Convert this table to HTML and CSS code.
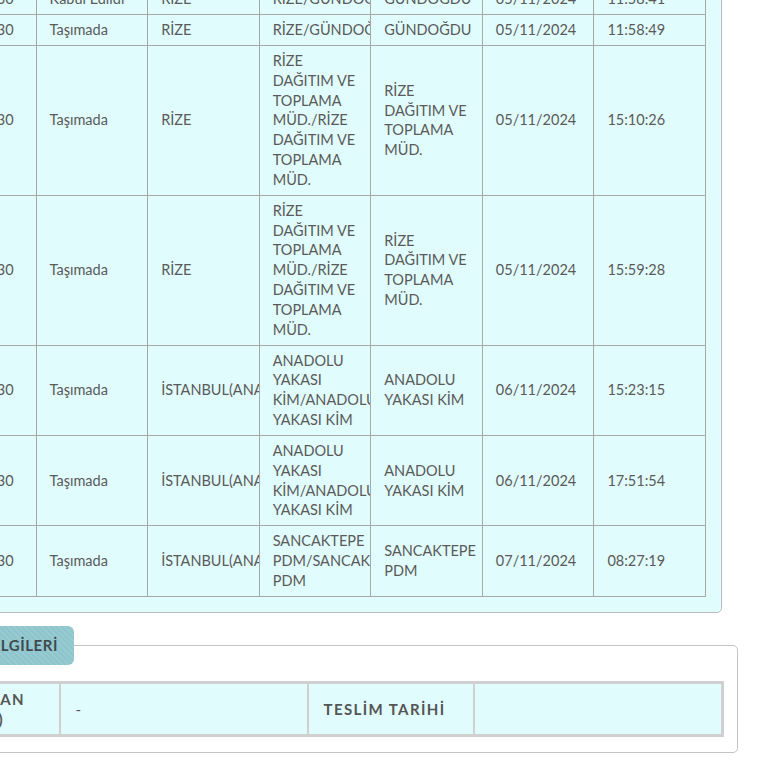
FILE: index.html
```html
<!DOCTYPE html>
<html lang="tr">
<head>
<meta charset="utf-8">
<title>Gönderi Hareketleri</title>
<link rel="stylesheet" href="styles.css">
</head>
<body>
<div class="page">
  <div class="panel">
    <table class="moves">
      <tbody>
        <tr><td>784296530</td><td>Kabul Edildi</td><td>RİZE</td><td>RİZE/GÜNDOĞDU</td><td>GÜNDOĞDU</td><td>05/11/2024</td><td>11:58:41</td></tr>
        <tr><td>784296530</td><td>Taşımada</td><td>RİZE</td><td>RİZE/GÜNDOĞDU</td><td>GÜNDOĞDU</td><td>05/11/2024</td><td>11:58:49</td></tr>
        <tr><td>784296530</td><td>Taşımada</td><td>RİZE</td><td>RİZE DAĞITIM VE TOPLAMA MÜD./RİZE DAĞITIM VE TOPLAMA MÜD.</td><td>RİZE DAĞITIM VE TOPLAMA MÜD.</td><td>05/11/2024</td><td>15:10:26</td></tr>
        <tr><td>784296530</td><td>Taşımada</td><td>RİZE</td><td>RİZE DAĞITIM VE TOPLAMA MÜD./RİZE DAĞITIM VE TOPLAMA MÜD.</td><td>RİZE DAĞITIM VE TOPLAMA MÜD.</td><td>05/11/2024</td><td>15:59:28</td></tr>
        <tr><td>784296530</td><td>Taşımada</td><td>İSTANBUL(ANADOLU)</td><td>ANADOLU YAKASI KİM/ANADOLU YAKASI KİM</td><td>ANADOLU YAKASI KİM</td><td>06/11/2024</td><td>15:23:15</td></tr>
        <tr><td>784296530</td><td>Taşımada</td><td>İSTANBUL(ANADOLU)</td><td>ANADOLU YAKASI KİM/ANADOLU YAKASI KİM</td><td>ANADOLU YAKASI KİM</td><td>06/11/2024</td><td>17:51:54</td></tr>
        <tr><td>784296530</td><td>Taşımada</td><td>İSTANBUL(ANADOLU)</td><td>SANCAKTEPE PDM/SANCAKTEPE PDM</td><td>SANCAKTEPE PDM</td><td>07/11/2024</td><td>08:27:19</td></tr>
      </tbody>
    </table>
  </div>

  <fieldset class="info">
    <legend class="info-title">TESLİM BİLGİLERİ</legend>
    <table class="info-table">
      <colgroup>
        <col class="c1"><col class="c2"><col class="c3"><col class="c4">
      </colgroup>
      <tbody>
        <tr>
          <th class="first">TESLİM ALAN<br>(ALICI ADI)</th>
          <td>-</td>
          <th>TESLİM TARİHİ</th>
          <td></td>
        </tr>
      </tbody>
    </table>
  </fieldset>
</div>
</body>
</html>
```

FILE: styles.css
```css
html, body {
  margin: 0;
  padding: 0;
  background: #ffffff;
}

body {
  font-family: Lato, "Open Sans", "DejaVu Sans", sans-serif;
  color: #5a5a5a;
  overflow: hidden;
}

.page {
  margin: -33px 0 0 -130px;
  width: 868px;
}

.panel {
  margin: 0 16px 0 38px;
  background: #e1fcfc;
  border: 1px solid #bcbcbc;
  border-radius: 5px;
  padding: 15px;
}

.moves {
  width: 782px;
  table-layout: fixed;
  border-collapse: collapse;
}

.moves td {
  border: 1px solid #a8a8a8;
  padding: 5.1px 12px 5.1px 13px;
  font-size: 14.5px;
  line-height: 19.8px;
  color: #5a5a5a;
  vertical-align: middle;
  text-align: left;
  overflow: hidden;
}

.info {
  margin: 13px 0 0;
  border: 1px solid #c4c4c4;
  border-radius: 5px;
  padding: 16px 16px 15px;
  min-width: 0;
}

.info-title {
  margin-left: 22px;
  padding: 10px 16px;
  background-color: #8ec5cd;
  background-image: repeating-linear-gradient(45deg, rgba(255, 255, 255, 0.09) 0 2px, rgba(255, 255, 255, 0) 2px 4px);
  border-radius: 6px;
  font-weight: 700;
  font-size: 15px;
  line-height: 19px;
  letter-spacing: 0.6px;
  color: #3e4a4f;
}

.info-table {
  width: 100%;
  table-layout: fixed;
  border-collapse: collapse;
  border: 3px solid #d0d0d0;
}

.info-table .c1 { width: 171px; }
.info-table .c2 { width: 248px; }
.info-table .c3 { width: 166px; }
.info-table .c4 { width: 249px; }

.info-table th,
.info-table td {
  background: #e1fcfc;
  border: 2px solid #d0d0d0;
  padding: 5px 15px;
  font-size: 15px;
  line-height: 20px;
  color: #555;
  text-align: left;
  vertical-align: middle;
  overflow: hidden;
}

.info-table th {
  font-weight: 700;
  letter-spacing: 1.4px;
}

.info-table th.first {
  padding-left: 24px;
}

.info-table td {
  font-weight: 400;
}
```
